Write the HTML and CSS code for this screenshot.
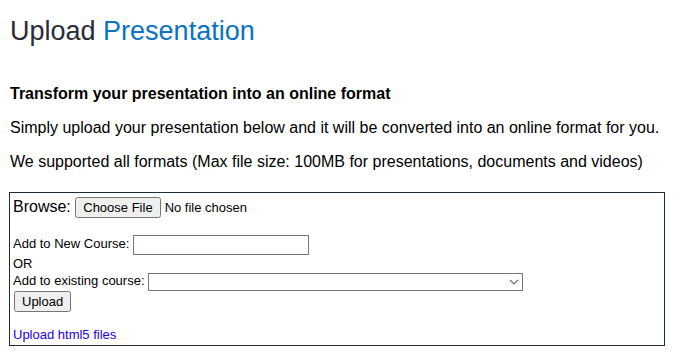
FILE: index.html
```html
<!DOCTYPE html>
<html lang="en">
<head>
    <meta charset="UTF-8">
    <title>Upload Presentation</title>
    <link rel="stylesheet" href="styles.css">
</head>
<body>
    <h1 class="page-title">Upload <span class="accent">Presentation</span></h1>

    <h4 class="lead">Transform your presentation into an online format</h4>
    <p class="info">Simply upload your presentation below and it will be converted into an online format for you.</p>
    <p class="info">We supported all formats (Max file size: 100MB for presentations, documents and videos)</p>

    <form class="upload-box">
        <div class="browse">Browse: <input type="file"></div>
        <div class="fields">
            <label>Add to New Course: <input type="text" class="course-input"></label><br>
            OR<br>
            <label>Add to existing course:
                <span class="select-wrap">
                    <select class="course-select"><option></option></select>
                    <svg class="chevron" width="10" height="6" viewBox="0 0 10 6"><path d="M1 1l4 4 4-4" fill="none" stroke="#6d6d6d" stroke-width="1.2"/></svg>
                </span>
            </label><br>
            <button type="button" class="upload-btn">Upload</button>
        </div>
        <a href="#" class="html5-link">Upload html5 files</a>
    </form>
</body>
</html>
```

FILE: styles.css
```css
body {
    margin: 0;
    padding: 0 10px;
    font-family: 'Liberation Sans', Arial, sans-serif;
    color: #000;
    background: #fff;
}

/* Heading */
.page-title {
    font-size: 27px;
    font-weight: normal;
    color: #2b2b3a;
    margin: 16px 0 38px;
}

.page-title .accent {
    color: #0a73c3;
}

.lead {
    font-size: 16px;
    font-weight: bold;
    margin: 0 0 16px;
}

.info {
    font-size: 16px;
    margin: 0 0 16px;
}

/* Upload box */
.upload-box {
    width: 656px;
    box-sizing: border-box;
    margin: 21px 0 0 -1px;
    border: 1px solid #1d2b3a;
    padding: 4px 3px 3px;
    font-size: 13px;
}

.browse {
    font-size: 16px;
    margin-bottom: 17px;
}

.browse input[type="file"] {
    font-size: 13px;
    font-family: 'Liberation Sans', Arial, sans-serif;
}

.fields {
    line-height: 17px;
}

.course-input {
    width: 170px;
    height: 16px;
    border: 1px solid #767676;
    padding: 1px 2px;
    vertical-align: middle;
}

.select-wrap {
    position: relative;
    display: inline-block;
    vertical-align: middle;
}

.course-select {
    appearance: none;
    display: block;
    width: 375px;
    height: 18px;
    background: #fff;
    border: 1px solid #767676;
    font-size: 13px;
}

.chevron {
    position: absolute;
    right: 4px;
    top: 6px;
    pointer-events: none;
}

.upload-btn {
    font-family: 'Liberation Sans', Arial, sans-serif;
    font-size: 13px;
    margin: 0 0 0 1px;
}

.html5-link {
    display: inline-block;
    margin-top: 15px;
    color: #2200ee;
    text-decoration: none;
    font-size: 13px;
}
```
